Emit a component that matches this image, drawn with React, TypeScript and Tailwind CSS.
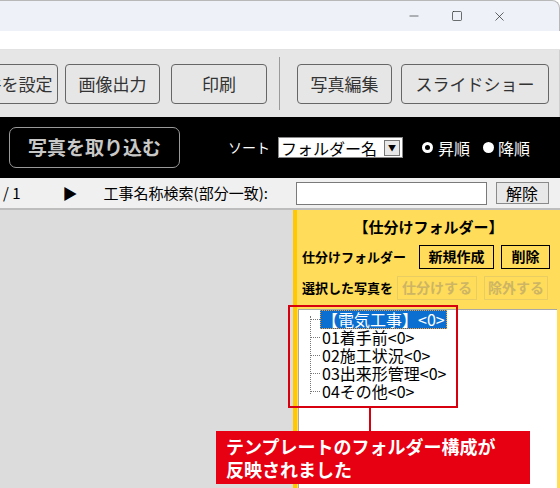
import { Minus, Square, X } from 'lucide-react';

const jp = { fontFamily: '"Noto Sans CJK JP", "Noto Sans", sans-serif' };

function ToolButton({ label, className }: { label: string; className: string }) {
  return (
    <div
      className={`flex h-[40px] items-center justify-center rounded-[4px] border border-[#666] bg-[#e6e6e6] text-[17px] text-[#333] ${className}`}
    >
      {label}
    </div>
  );
}

const treeItems = ['01着手前<0>', '02施工状況<0>', '03出来形管理<0>', '04その他<0>'];

export default function App() {
  return (
    <div className="relative h-[488px] w-[560px] overflow-hidden bg-white" style={jp}>
      {/* title bar */}
      <div className="flex h-[31px] items-center justify-end rounded-tr-[8px] border-t border-r border-[#b8b8b8] bg-[#eef2f8] text-[#222]">
        <div className="flex w-[43px] justify-center">
          <Minus size={14} strokeWidth={1.1} />
        </div>
        <div className="flex w-[43px] justify-center">
          <Square size={12} strokeWidth={1.3} />
        </div>
        <div className="mr-[38px] flex w-[43px] justify-center">
          <X size={15} strokeWidth={1.1} />
        </div>
      </div>
      <div className="h-[19px] border-b border-[#e2e2e2] bg-white" />

      {/* toolbar */}
      <div className="flex h-[67px] items-center border-r border-[#cfcfcf] bg-[#e6e6e6]">
        <ToolButton label="条件を設定" className="-ml-[38px] w-[96px]" />
        <ToolButton label="画像出力" className="ml-[7px] w-[95px]" />
        <ToolButton label="印刷" className="ml-[11px] w-[96px]" />
        <div className="ml-[12px] h-[53px] w-px bg-[#9a9a9a]" />
        <ToolButton label="写真編集" className="ml-[17px] w-[95px]" />
        <ToolButton label="スライドショー" className="ml-[9px] w-[148px]" />
      </div>

      {/* black bar */}
      <div className="flex h-[61px] items-center bg-black">
        <div className="ml-[9px] flex h-[41px] w-[171px] items-center justify-center rounded-[7px] border border-[#9a9a9a] text-[19px] font-semibold text-[#c8c8c8]">
          写真を取り込む
        </div>
        <span className="ml-[48px] text-[14px] text-white">ソート</span>
        <div className="ml-[8px] flex h-[21px] w-[125px] items-center justify-between border border-[#888] bg-white pl-[2px] pr-[2px] text-[16px] text-black">
          <span>フォルダー名</span>
          <span className="flex h-[16px] w-[16px] items-center justify-center border border-[#777] bg-[#e8e8e8] text-[8px]">▼</span>
        </div>
        <div className="ml-[19px] flex items-center gap-[5px] text-[16px] text-white">
          <span className="flex h-[11px] w-[11px] items-center justify-center rounded-full bg-white">
            <span className="h-[5px] w-[5px] rounded-full bg-black" />
          </span>
          昇順
        </div>
        <div className="ml-[13px] flex items-center gap-[4px] text-[16px] text-white">
          <span className="h-[11px] w-[11px] rounded-full bg-white" />
          降順
        </div>
      </div>

      {/* search row */}
      <div className="flex h-[32px] items-center border-b-[2px] border-[#bdbdbd] bg-[#f0f0f0] text-[15px] text-black">
        <span className="ml-[3px]">/ 1</span>
        <span className="ml-[42px] text-[15px]">▶</span>
        <span className="ml-[26px] w-[186px] whitespace-nowrap">工事名称検索(部分一致):</span>
        <div className="ml-[6px] h-[23px] w-[191px] border border-[#7a7a7a] bg-white" />
        <div className="ml-[9px] flex h-[22px] w-[53px] items-center justify-center border border-[#8a8a8a] bg-[#e8e8e8] text-[16px]">
          解除
        </div>
      </div>

      {/* main area */}
      <div className="flex h-[278px]">
        <div className="w-[293px] bg-[#dcdcdc]" />
        <div className="flex flex-1 flex-col border-l-[4px] border-[#ffc800] bg-[#ffdc5a]">
          <div className="mt-[6px] text-center text-[15px] font-bold text-black">【仕分けフォルダー】</div>
          <div className="mt-[6px] flex items-center text-black">
            <span className="ml-[5px] w-[117px] text-[13px] font-bold">仕分けフォルダー</span>
            <div className="flex h-[24px] w-[75px] items-center justify-center border-[1.5px] border-black text-[14px] font-bold">
              新規作成
            </div>
            <div className="ml-[7px] flex h-[24px] w-[49px] items-center justify-center border-[1.5px] border-black text-[14px] font-bold">
              削除
            </div>
          </div>
          <div className="mt-[7px] flex items-center">
            <span className="ml-[5px] w-[95px] text-[13px] font-bold text-black">選択した写真を</span>
            <div className="flex h-[24px] w-[80px] items-center justify-center border border-[#e9cc62] text-[14px] font-bold text-[#cdb564]">
              仕分けする
            </div>
            <div className="ml-[7px] flex h-[24px] w-[64px] items-center justify-center border border-[#e9cc62] text-[14px] font-bold text-[#cdb564]">
              除外する
            </div>
          </div>
          <div className="relative ml-px mr-[3px] mt-[9px] flex-1 border-l border-t border-[#a8a8a8] bg-white text-[16px] leading-[17px] text-black">
            <div className="absolute left-[11px] top-[6px] h-[78px] border-l border-dotted border-[#777]" />
            <div className="pl-[12px] pt-[1px]">
              <div className="flex h-[18px] items-center">
                <span className="w-[9px] border-t border-dotted border-[#777]" />
                <span className="border border-dotted border-[#ff9a2e] bg-[#0a6fd1] px-[1px] text-white">【電気工事】&lt;0&gt;</span>
              </div>
              {treeItems.map((t) => (
                <div key={t} className="flex h-[18px] items-center">
                  <span className="w-[9px] border-t border-dotted border-[#777]" />
                  <span className="pl-[2px]">{t}</span>
                </div>
              ))}
            </div>
          </div>
        </div>
      </div>

      {/* annotation */}
      <div className="absolute left-[288px] top-[305px] h-[103px] w-[170px] border-[2px] border-[#d7000f]" />
      <div className="absolute left-[369px] top-[407px] h-[25px] w-[2px] bg-[#d7000f]" />
      <div className="absolute left-[216px] top-[431px] flex h-[53px] w-[314px] flex-col justify-center bg-[#e60012] pl-[10px] text-[18px] font-bold leading-[23px] text-white">
        <span>テンプレートのフォルダー構成が</span>
        <span>反映されました</span>
      </div>
    </div>
  );
}
